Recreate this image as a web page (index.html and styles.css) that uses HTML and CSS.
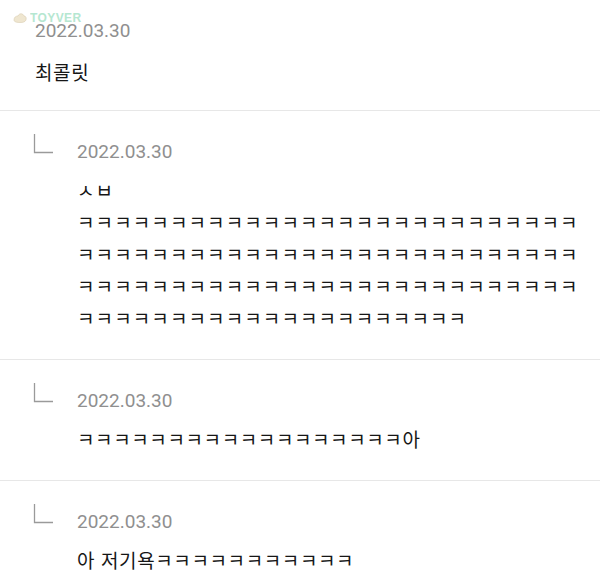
FILE: index.html
```html
<!DOCTYPE html>
<html lang="ko">
<head>
<meta charset="utf-8">
<link rel="stylesheet" href="styles.css">
</head>
<body>
<div class="watermark">
  <svg class="wm-icon" width="14" height="12" viewBox="0 0 14 12"><path d="M1 8 C1 5 3 4 5 4 C6 1 10 1 11 4 C13 4 13.5 6 13 8 C12 10 10 10.5 7 10.5 C4 10.5 1 10 1 8 Z" fill="#efe6d0" stroke="#d8ccb0" stroke-width="0.6"/></svg>
  <span class="wm-text">TOYVER</span>
</div>
<div class="list">
  <div class="comment top">
    <div class="body">
      <div class="date">2022.03.30</div>
      <div class="text">최콜릿</div>
    </div>
  </div>
  <div class="comment reply">
    <svg class="arrow" width="22" height="22" viewBox="0 0 22 22"><path d="M1.5 0 V18.5 H20" fill="none" stroke="#9a9a9a" stroke-width="1.3"/></svg>
    <div class="body">
      <div class="date">2022.03.30</div>
      <div class="text wide">ㅅㅂ<br>ㅋㅋㅋㅋㅋㅋㅋㅋㅋㅋㅋㅋㅋㅋㅋㅋㅋㅋㅋㅋㅋㅋㅋㅋㅋㅋㅋㅋㅋㅋㅋㅋㅋㅋㅋㅋㅋㅋㅋㅋㅋㅋㅋㅋㅋㅋㅋㅋㅋㅋㅋㅋㅋㅋㅋㅋㅋㅋㅋㅋㅋㅋㅋㅋㅋㅋㅋㅋㅋㅋㅋㅋㅋㅋㅋㅋㅋㅋㅋㅋㅋㅋㅋㅋㅋㅋㅋㅋㅋㅋㅋㅋㅋㅋㅋㅋㅋㅋㅋㅋㅋㅋ</div>
    </div>
  </div>
  <div class="comment reply">
    <svg class="arrow" width="22" height="22" viewBox="0 0 22 22"><path d="M1.5 0 V18.5 H20" fill="none" stroke="#9a9a9a" stroke-width="1.3"/></svg>
    <div class="body">
      <div class="date">2022.03.30</div>
      <div class="text">ㅋㅋㅋㅋㅋㅋㅋㅋㅋㅋㅋㅋㅋㅋㅋㅋㅋㅋ아</div>
    </div>
  </div>
  <div class="comment reply">
    <svg class="arrow" width="22" height="22" viewBox="0 0 22 22"><path d="M1.5 0 V18.5 H20" fill="none" stroke="#9a9a9a" stroke-width="1.3"/></svg>
    <div class="body">
      <div class="date">2022.03.30</div>
      <div class="text">아 저기욕ㅋㅋㅋㅋㅋㅋㅋㅋㅋㅋㅋ</div>
    </div>
  </div>
</div>
</body>
</html>
```
FILE: styles.css
```css
html, body {
  margin: 0;
  padding: 0;
  background: #ffffff;
  overflow: hidden;
}
body {
  width: 600px;
  height: 584px;
  position: relative;
  font-family: "Noto Sans CJK KR", "Noto Sans", sans-serif;
}
.watermark {
  position: absolute;
  left: 13px;
  top: 11px;
  display: flex;
  align-items: center;
  gap: 3px;
  z-index: 2;
}
.wm-text {
  font-family: "Liberation Sans", sans-serif;
  font-weight: bold;
  font-size: 12px;
  letter-spacing: 0.4px;
  color: #a9e3c9;
  opacity: 0.85;
}
.list {
  display: flex;
  flex-direction: column;
}
.comment {
  display: flex;
  border-bottom: 1px solid #e7e7e7;
}
.comment.top {
  padding: 19px 0 22px 35px;
}
.comment.reply {
  padding: 29px 0 25px 33px;
}
.arrow {
  flex: none;
  margin-top: -6px;
  margin-right: 22px;
}
.body {
  display: flex;
  flex-direction: column;
  gap: 10px;
}
.comment.top .body {
  gap: 13px;
}
.date {
  font-family: Roboto, "Liberation Sans", sans-serif;
  font-size: 19px;
  line-height: 24px;
  color: #8f8f8f;
}
.text {
  font-size: 19px;
  line-height: 32px;
  letter-spacing: 0.6px;
  color: #161616;
}
.text.wide {
  width: 502px;
  letter-spacing: 1.1px;
}
```
